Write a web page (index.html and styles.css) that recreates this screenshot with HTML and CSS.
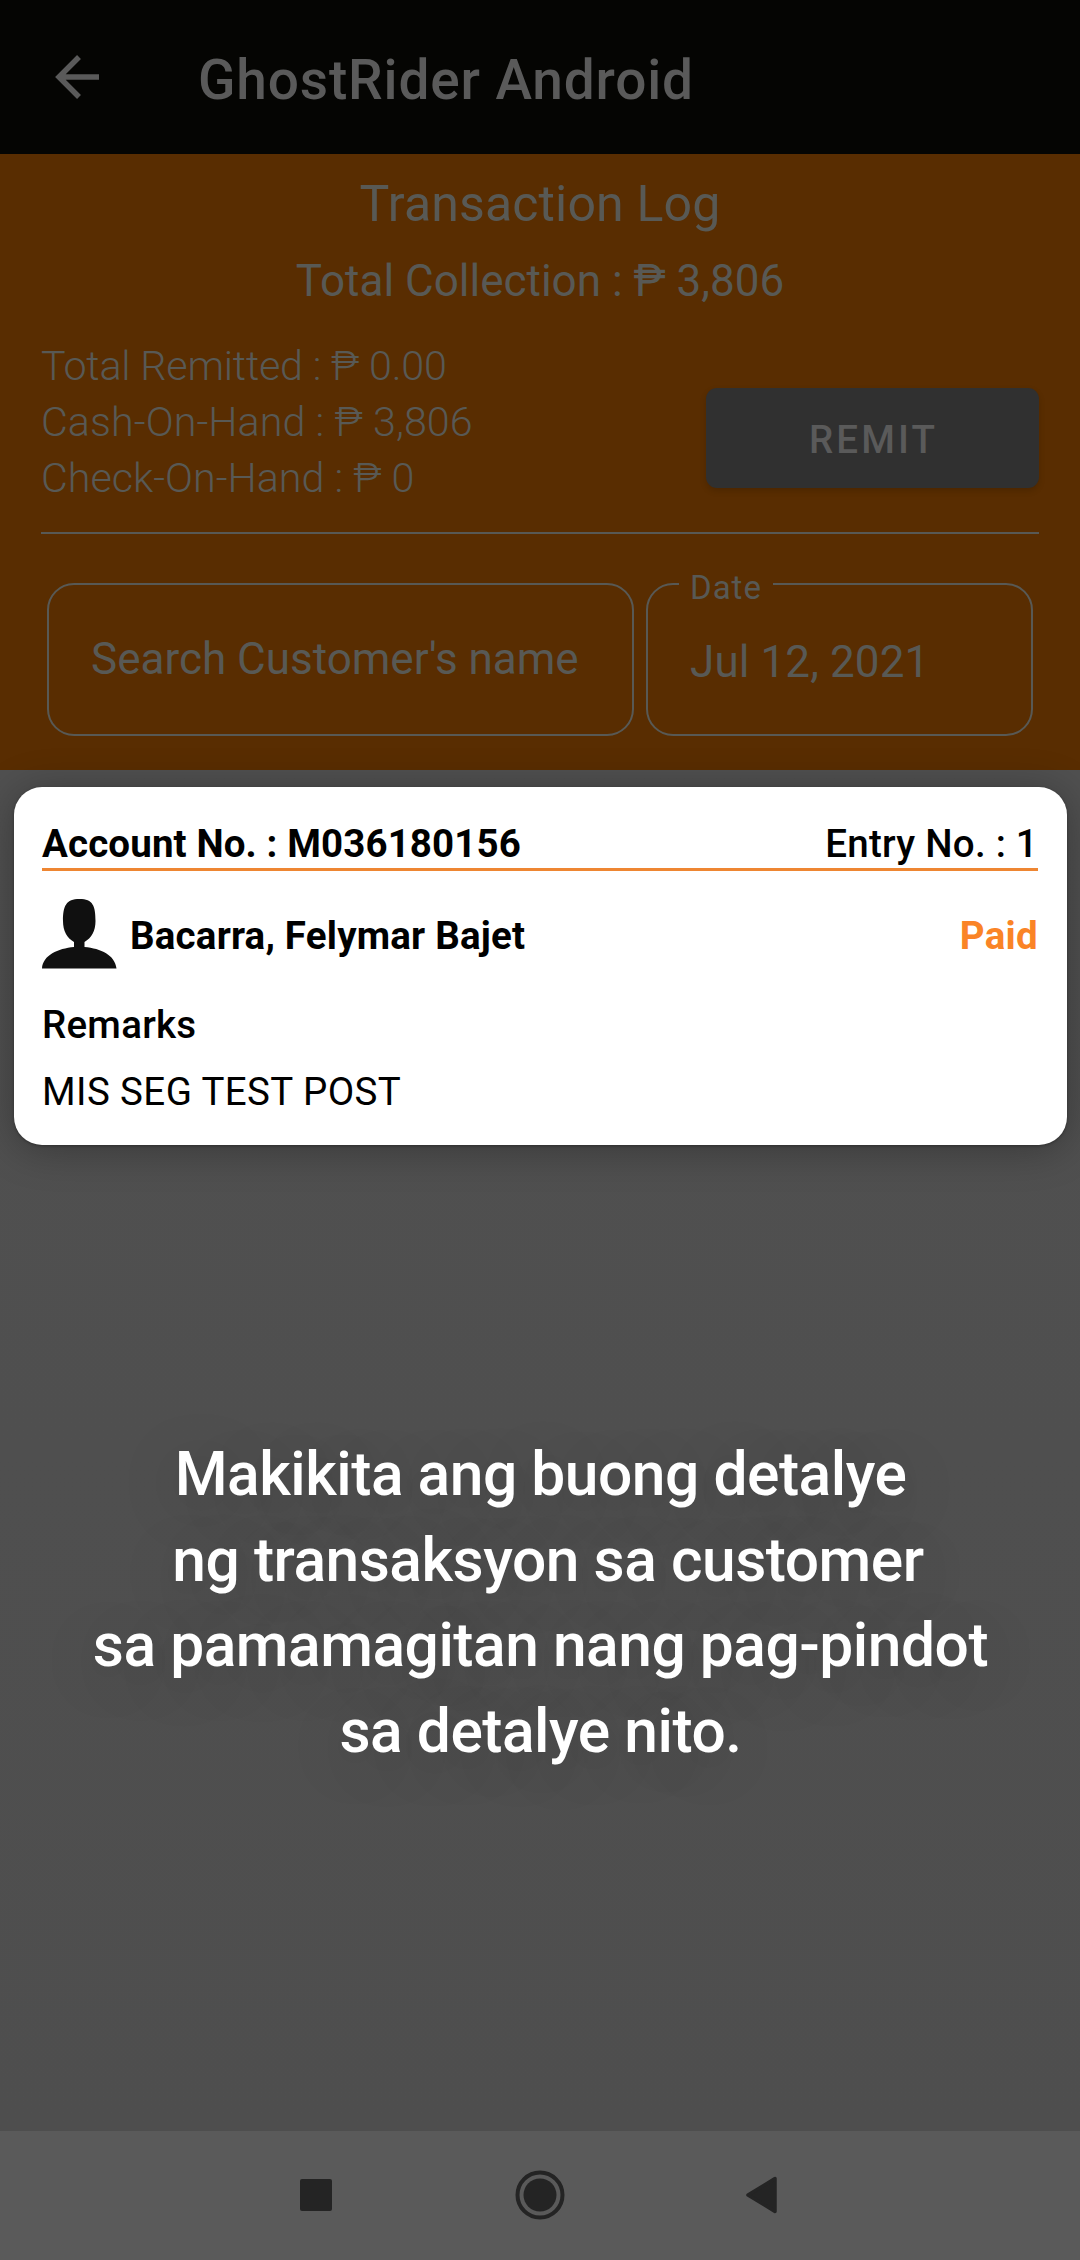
FILE: index.html
```html
<!DOCTYPE html>
<html lang="fil">
<head>
<meta charset="utf-8">
<title>GhostRider Android</title>
<link rel="stylesheet" href="styles.css">
</head>
<body>
<div class="screen">
  <header class="appbar">
    <svg class="back" width="46" height="46" viewBox="0 0 46 46"><path d="M25 3 5 23 25 43M5 23H45" fill="none" stroke="currentColor" stroke-width="5.500"/></svg>
    <h1 class="appbar-title">GhostRider Android</h1>
  </header>
  <section class="summary">
    <h2 class="summary-title">Transaction Log</h2>
    <p class="summary-total">Total Collection : ₱ 3,806</p>
    <div class="totals">
      <div class="totals-list">
        <p class="t-remitted">Total Remitted : ₱ 0.00</p>
        <p class="t-cash">Cash-On-Hand : ₱ 3,806</p>
        <p class="t-check">Check-On-Hand : ₱ 0</p>
      </div>
      <button class="remit">REMIT</button>
    </div>
    <div class="filters">
      <div class="field search"><span>Search Customer's name</span></div>
      <div class="field date"><span class="field-label">Date</span><span class="date-value">Jul 12, 2021</span></div>
    </div>
  </section>
  <main class="content">
    <article class="card">
      <div class="card-head"><span class="account">Account No. : M036180156</span><span class="entry">Entry No. : 1</span></div>
      <div class="person">
        <svg class="avatar" width="75" height="70" viewBox="0 0 75 70"><path d="M0 69.500C1 56 16 49.500 32 48V43C25 39 21 32 21 22C21 7 24 0 37.500 0S53.500 7 53.500 22C53.500 32 49.500 39 42.500 43V48C59 49.500 73 56 74.500 69.500Z" fill="#101010"/></svg>
        <span class="name">Bacarra, Felymar Bajet</span><span class="status">Paid</span>
      </div>
      <h3 class="remarks">Remarks</h3>
      <p class="remarks-text">MIS SEG TEST POST</p>
    </article>
    <div class="hint">
      <p>Makikita ang buong detalye</p>
      <p class="hint-indent">ng transaksyon sa customer</p>
      <p>sa pamamagitan nang pag-pindot</p>
      <p>sa detalye nito.</p>
    </div>
  </main>
  <nav class="navbar">
    <svg width="50" height="50" viewBox="0 0 50 50"><rect x="9" y="9" width="32" height="32" rx="2" fill="#242424"/></svg>
    <svg width="50" height="50" viewBox="0 0 50 50"><circle cx="25" cy="25" r="22.500" fill="none" stroke="#242424" stroke-width="4"/><circle cx="25" cy="25" r="16.500" fill="#242424"/></svg>
    <svg width="50" height="50" viewBox="0 0 50 50"><path d="M9 25 36 8.500V41.500Z" fill="#242424" stroke="#242424" stroke-width="3.500" stroke-linejoin="round"/></svg>
  </nav>
</div>
</body>
</html>
```
FILE: styles.css
```css
* { box-sizing: border-box; margin: 0; padding: 0; }
body { font-family: Roboto, sans-serif; background: #4f4f4f; color: #585955; }
.screen { width: 1080px; height: 2260px; display: flex; flex-direction: column; overflow: hidden; }
p, h1, h2, h3, span { white-space: pre; }

.appbar { height: 154px; flex: none; display: flex; align-items: center; background: #050503; color: #5a5a5a; padding-left: 54px; }
.back { margin-right: 98px; }
.appbar-title { font-size: 55px; font-weight: 500; line-height: 64px; padding-top: 6px; letter-spacing: .85px; }

.summary { height: 616px; flex: none; background: #592d01; padding: 18px 41px 0; }
.summary-title { font-size: 50px; font-weight: 400; line-height: 64px; text-align: center; letter-spacing: .15px; }
.summary-total { font-size: 44px; line-height: 52px; margin-top: 19px; text-align: center; }
.totals { display: flex; justify-content: space-between; align-items: flex-start; margin-top: 31px; height: 196px; border-bottom: 2px solid #585955; }
.totals-list { font-size: 41.250px; font-weight: 300; line-height: 56px; }
.t-remitted { letter-spacing: -.2px; }
.t-cash { letter-spacing: .07px; }
.remit { width: 333px; height: 100px; margin-top: 50px; border: 0; border-radius: 11px; background: #303030; color: #5a5a5a; font: 500 38.500px Roboto, sans-serif; letter-spacing: 3.100px; padding: 2px 0 0 2px; box-shadow: 0 3px 6px rgba(0,0,0,.15); }
.filters { display: flex; gap: 12px; margin: 49px 6px 0; }
.field { position: relative; height: 153px; border: 2px solid #585955; border-radius: 27px; display: flex; align-items: center; padding-left: 42px; padding-bottom: 2px; font-size: 44px; }
.search { width: 587px; }
.date { width: 387px; }
.date-value { padding-top: 7px; letter-spacing: .1px; }
.field-label { position: absolute; left: 31px; top: -19px; width: 94px; padding-left: 11px; background: #592d01; font-size: 33px; line-height: 44px; letter-spacing: 1px; }

.content { height: 1361px; flex: none; padding: 17px 13px 0 14px; background: linear-gradient(#505050, #4e4e4e); }
.card { position: relative; height: 358px; border-radius: 28px; background: #fff; color: #000; padding: 34px 29px 0 28px; font-size: 38.500px; line-height: 46px; box-shadow: 0 4px 42px rgba(0,0,0,.3), 0 1px 3px rgba(0,0,0,.3); }
.card-head { display: flex; justify-content: space-between; height: 50px; border-bottom: 3px solid #ee8632; }
.account, .name, .status { font-weight: 700; letter-spacing: .12px; }
.entry, .remarks { font-size: inherit; font-weight: 500; letter-spacing: .25px; }
.person { display: flex; align-items: center; height: 70px; margin-top: 28px; }
.name { margin-left: 13px; padding-top: 4px; letter-spacing: .2px; }
.status { margin-left: auto; padding-top: 4px; letter-spacing: .3px; color: #fa8426; }
.remarks { margin-top: 33px; }
.remarks-text { margin-top: 21px; letter-spacing: .4px; }
.hint { margin-top: 287px; text-align: center; color: #fff; font-size: 60.500px; font-weight: 500; line-height: 85.500px; letter-spacing: -.48px; text-shadow: 0 10px 60px rgba(0,0,0,.22); }
.hint-indent { padding-left: 15px; }

.navbar { height: 129px; flex: none; background: #5a5a5a; display: flex; justify-content: space-between; padding: 39px 291px 0 291px; }
```
